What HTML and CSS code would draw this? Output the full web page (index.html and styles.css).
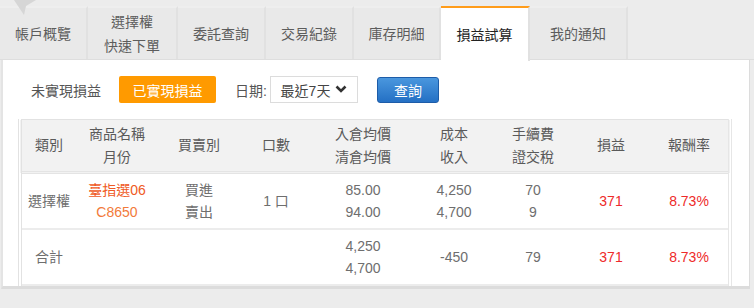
FILE: index.html
```html
<!DOCTYPE html>
<html>

<head>
    <meta charset="UTF-8">
    <title>損益試算</title>
    <link rel="stylesheet" href="styles.css">
</head>

<body>
    <svg class="corner-mark" width="40" height="20" viewBox="0 0 40 20">
        <path d="M14 0 L36 0 L26 6 L24 15 Z" fill="#d6d6d6" />
    </svg>
    <div class="tabs">
        <div class="tab tab-w88">帳戶概覽</div>
        <div class="tab tab-w90">選擇權<br>快速下單</div>
        <div class="tab tab-w88">委託查詢</div>
        <div class="tab tab-w88">交易紀錄</div>
        <div class="tab tab-w87">庫存明細</div>
        <div class="tab tab-w89 active">損益試算</div>
        <div class="tab tab-w98">我的通知</div>
    </div>
    <div class="panel">
        <div class="filter">
            <span class="filter-label">未實現損益</span>
            <button class="btn-orange">已實現損益</button>
            <span class="date-label">日期:</span>
            <div class="select">最近7天
                <svg width="12" height="9" viewBox="0 0 12 9">
                    <path d="M1.5 1.5 L6 6 L10.5 1.5" stroke="#333" stroke-width="2.6" fill="none" />
                </svg>
            </div>
            <button class="btn-blue">查詢</button>
        </div>
        <table class="result">
            <thead>
                <tr>
                    <th class="c1">類別</th>
                    <th class="c2">商品名稱<br>月份</th>
                    <th class="c3">買賣別</th>
                    <th class="c4">口數</th>
                    <th class="c5">入倉均價<br>清倉均價</th>
                    <th class="c6">成本<br>收入</th>
                    <th class="c7">手續費<br>證交稅</th>
                    <th class="c8">損益</th>
                    <th class="c9">報酬率</th>
                </tr>
            </thead>
            <tbody>
                <tr>
                    <td>選擇權</td>
                    <td class="product"><span class="red-orange">臺指選06</span><br>C8650</td>
                    <td>買進<br>賣出</td>
                    <td>1 口</td>
                    <td>85.00<br>94.00</td>
                    <td>4,250<br>4,700</td>
                    <td>70<br>9</td>
                    <td class="profit">371</td>
                    <td class="profit">8.73%</td>
                </tr>
                <tr>
                    <td>合計</td>
                    <td></td>
                    <td></td>
                    <td></td>
                    <td>4,250<br>4,700</td>
                    <td>-450</td>
                    <td>79</td>
                    <td class="profit">371</td>
                    <td class="profit">8.73%</td>
                </tr>
            </tbody>
        </table>
    </div>
</body>

</html>
```

FILE: styles.css
```css
* {
    box-sizing: border-box;
    font-family: "Liberation Sans", "Noto Sans CJK TC", sans-serif;
}

body {
    margin: 0;
    background-color: #ececec;
    color: #555;
    font-size: 14px;
    position: relative;
}

.corner-mark {
    position: absolute;
    left: 0;
    top: 0;
}

.tabs {
    display: flex;
    padding-top: 6px;
    height: 60px;
    border-bottom: 1px solid #dedede;
}

.tab {
    height: 53px;
    background-color: #e9e9e9;
    border-right: 2px solid #e1e1e1;
    border-top: 2px solid #eeeeee;
    display: flex;
    align-items: center;
    justify-content: center;
    text-align: center;
    line-height: 24px;
    color: #5c5c5c;
}

.tab-w88 { width: 88px; }
.tab-w90 { width: 90px; }
.tab-w87 { width: 87px; }
.tab-w89 { width: 89px; }
.tab-w98 { width: 98px; }

.tab.active {
    background-color: #fff;
    border-top: 2px solid #ff9c1a;
    color: #222;
    height: 55px;
    position: relative;
    z-index: 1;
}

.panel {
    background-color: #fff;
    margin: 0 4px 0 1px;
    border-left: 2px solid #e4e4e4;
    border-right: 1px solid #dcdcdc;
    border-bottom: 3px solid #dcdcdc;
    padding: 16px 18px 4px 15px;
    height: 229px;
}

.filter {
    display: flex;
    align-items: center;
    height: 27px;
}

.filter-label {
    margin-left: 13px;
    width: 88px;
}

.btn-orange {
    width: 97px;
    height: 27px;
    border: none;
    border-radius: 2px;
    background-color: #ff9a00;
    color: #fff;
    font-size: 14px;
    padding: 0;
}

.date-label {
    margin-left: 19px;
    width: 35px;
}

.select {
    width: 88px;
    height: 27px;
    border: 1px solid #dcdcdc;
    display: flex;
    align-items: center;
    justify-content: center;
    gap: 5px;
    color: #444;
}

.btn-blue {
    margin-left: 19px;
    width: 62px;
    height: 26px;
    border: 1px solid #1d5ca8;
    border-radius: 3px;
    background: linear-gradient(#4a97de, #2470c4);
    color: #fff;
    font-size: 14px;
    padding: 0;
}

.result {
    margin-top: 16px;
    width: 714px;
    border-collapse: collapse;
    border: 1px solid #e2e2e2;
    border-left: 4px double #e2e2e2;
    border-right: 4px double #e6e6e6;
}

.result th {
    background-color: #f2f2f2;
    font-weight: normal;
    height: 53px;
    line-height: 23px;
    color: #5a5a5a;
    border-bottom: 3px double #e4e4e4;
}

.result td {
    text-align: center;
    height: 56px;
    line-height: 22px;
    color: #6e6e6e;
    border-bottom: 2px solid #ececec;
}

.c1 { width: 56px; }
.c2 { width: 82px; }
.c3 { width: 82px; }
.c4 { width: 72px; }
.c5 { width: 102px; }
.c6 { width: 80px; }
.c7 { width: 78px; }
.c8 { width: 78px; }
.c9 { width: 80px; }

.result td.product {
    color: #f27a3a;
}

.red-orange {
    color: #ef5a24;
}

.result td.profit {
    color: #ee2a2a;
}
```
